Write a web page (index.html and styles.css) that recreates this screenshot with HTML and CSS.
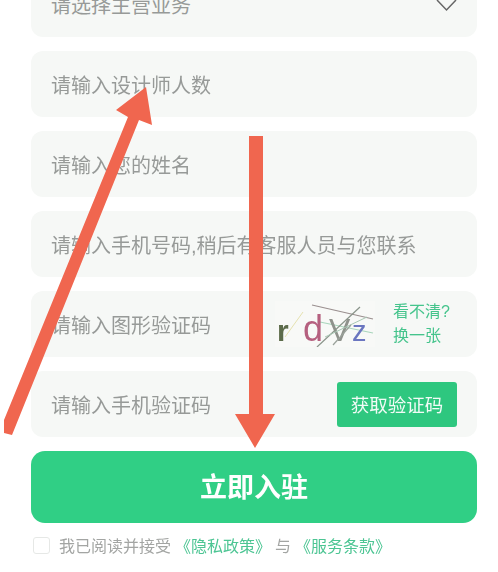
FILE: index.html
```html
<!DOCTYPE html>
<html lang="zh">
<head>
<meta charset="utf-8">
<title>立即入驻</title>
<link rel="stylesheet" href="styles.css">
</head>
<body>
<main class="form">
  <div class="row">
    <span class="label">请选择主营业务</span>
    <svg class="chevron" width="22" height="14" viewBox="0 0 22 14"><path d="M1 2 L10.5 12 L20 2" fill="none" stroke="#666" stroke-width="1.5"/></svg>
  </div>
  <div class="row"><span class="label">请输入设计师人数</span></div>
  <div class="row"><span class="label">请输入您的姓名</span></div>
  <div class="row"><span class="label">请输入手机号码,稍后有客服人员与您联系</span></div>
  <div class="row">
    <span class="label">请输入图形验证码</span>
    <svg class="captcha" width="100" height="46" viewBox="0 0 100 46">
      <rect width="100" height="46" fill="#f8f9f7"/>
      <path d="M10 36 L28 11" stroke="#e6e2b0" stroke-width="1" fill="none"/>
      <path d="M37 4 L98 18" stroke="#9a8f8f" stroke-width="1.2" fill="none"/>
      <path d="M45 21 L98 32" stroke="#a9d6bd" stroke-width="1.2" fill="none"/>
      <text class="cap cap-r" x="2" y="40">r</text>
      <text class="cap cap-d" x="28" y="40">d</text>
      <text class="cap cap-v" x="54" y="40">V</text>
      <text class="cap cap-z" x="77" y="40">z</text>
      <path d="M42 46 L85 6" stroke="#8a948a" stroke-width="1.2" fill="none"/>
      <path d="M50 36 L92 16" stroke="#a8c8b4" stroke-width="1" fill="none"/>
      <path d="M58 44 L76 24" stroke="#9aa29a" stroke-width="1.2" fill="none"/>
    </svg>
    <div class="hint">看不清?<br>换一张</div>
  </div>
  <div class="row">
    <span class="label">请输入手机验证码</span>
    <button class="code-btn" type="button">获取验证码</button>
  </div>
  <button class="submit" type="button">立即入驻</button>
  <div class="terms">
    <span class="check"></span>
    <span class="terms-text">我已阅读并接受</span>
    <a class="link">《隐私政策》</a>
    <span class="terms-text">与</span>
    <a class="link">《服务条款》</a>
  </div>
</main>
<svg class="arrows" width="498" height="572" viewBox="0 0 498 572">
  <path fill="#f0664f" d="M4 420 L128 117 L116 110 L146 87 L152 125 L139 120 L12 435 L4 433 Z"/>
  <path fill="#f0664f" d="M249 136 H263 V414 H275 L255 448 L235 414 H249 Z"/>
</svg>
</body>
</html>
```
FILE: styles.css
```css
* { box-sizing: border-box; }
html, body { margin: 0; height: 572px; overflow: hidden; background: #fff; }
body {
  position: relative;
  font-family: "Liberation Sans", "Noto Sans CJK SC", sans-serif;
}
.form {
  display: flex;
  flex-direction: column;
  gap: 14px;
  margin-top: -29px;
  padding: 0 21px 0 31px;
  filter: blur(0.4px);
}
.row {
  display: flex;
  align-items: center;
  height: 66px;
  padding: 0 20px;
  background: #f6f8f6;
  border-radius: 12px;
}
.label {
  flex: 1;
  font-size: 20px;
  color: #979a98;
  white-space: nowrap;
}
.chevron { margin-right: -1px; margin-top: 1px; }
.captcha { margin-right: 18px; }
.cap { font-family: "Liberation Sans", sans-serif; }
.cap-r { font-size: 30px; font-weight: 700; fill: #5c6b4a; }
.cap-d { font-size: 36px; fill: #b5607f; }
.cap-v { font-size: 32px; fill: #8f928c; }
.cap-z { font-size: 29px; fill: #6b76c0; }
.hint {
  width: 84px;
  margin-right: -20px;
  font-size: 16px;
  line-height: 24px;
  color: #45c48c;
}
.code-btn {
  width: 120px;
  height: 45px;
  border: 0;
  border-radius: 3px;
  background: #2ec77f;
  color: #f2fbf6;
  font: inherit;
  font-size: 18.5px;
}
.submit {
  height: 72px;
  padding-bottom: 5px;
  border: 0;
  border-radius: 14px;
  background: #30cf85;
  color: #fff;
  font: inherit;
  font-size: 27px;
  font-weight: 700;
}
.terms {
  display: flex;
  align-items: center;
  height: 20px;
  margin-top: -2px;
  padding-left: 2px;
  font-size: 16px;
  white-space: nowrap;
}
.check {
  width: 17px;
  height: 17px;
  margin-right: 9px;
  background: #fff;
  border: 1px solid #e6e8e6;
  border-radius: 3px;
}
.terms-text { color: #a3a5a3; }
.link { margin: 0 4px; color: #4cc593; }
.arrows { position: absolute; left: 0; top: 0; pointer-events: none; filter: blur(0.3px); }
```
